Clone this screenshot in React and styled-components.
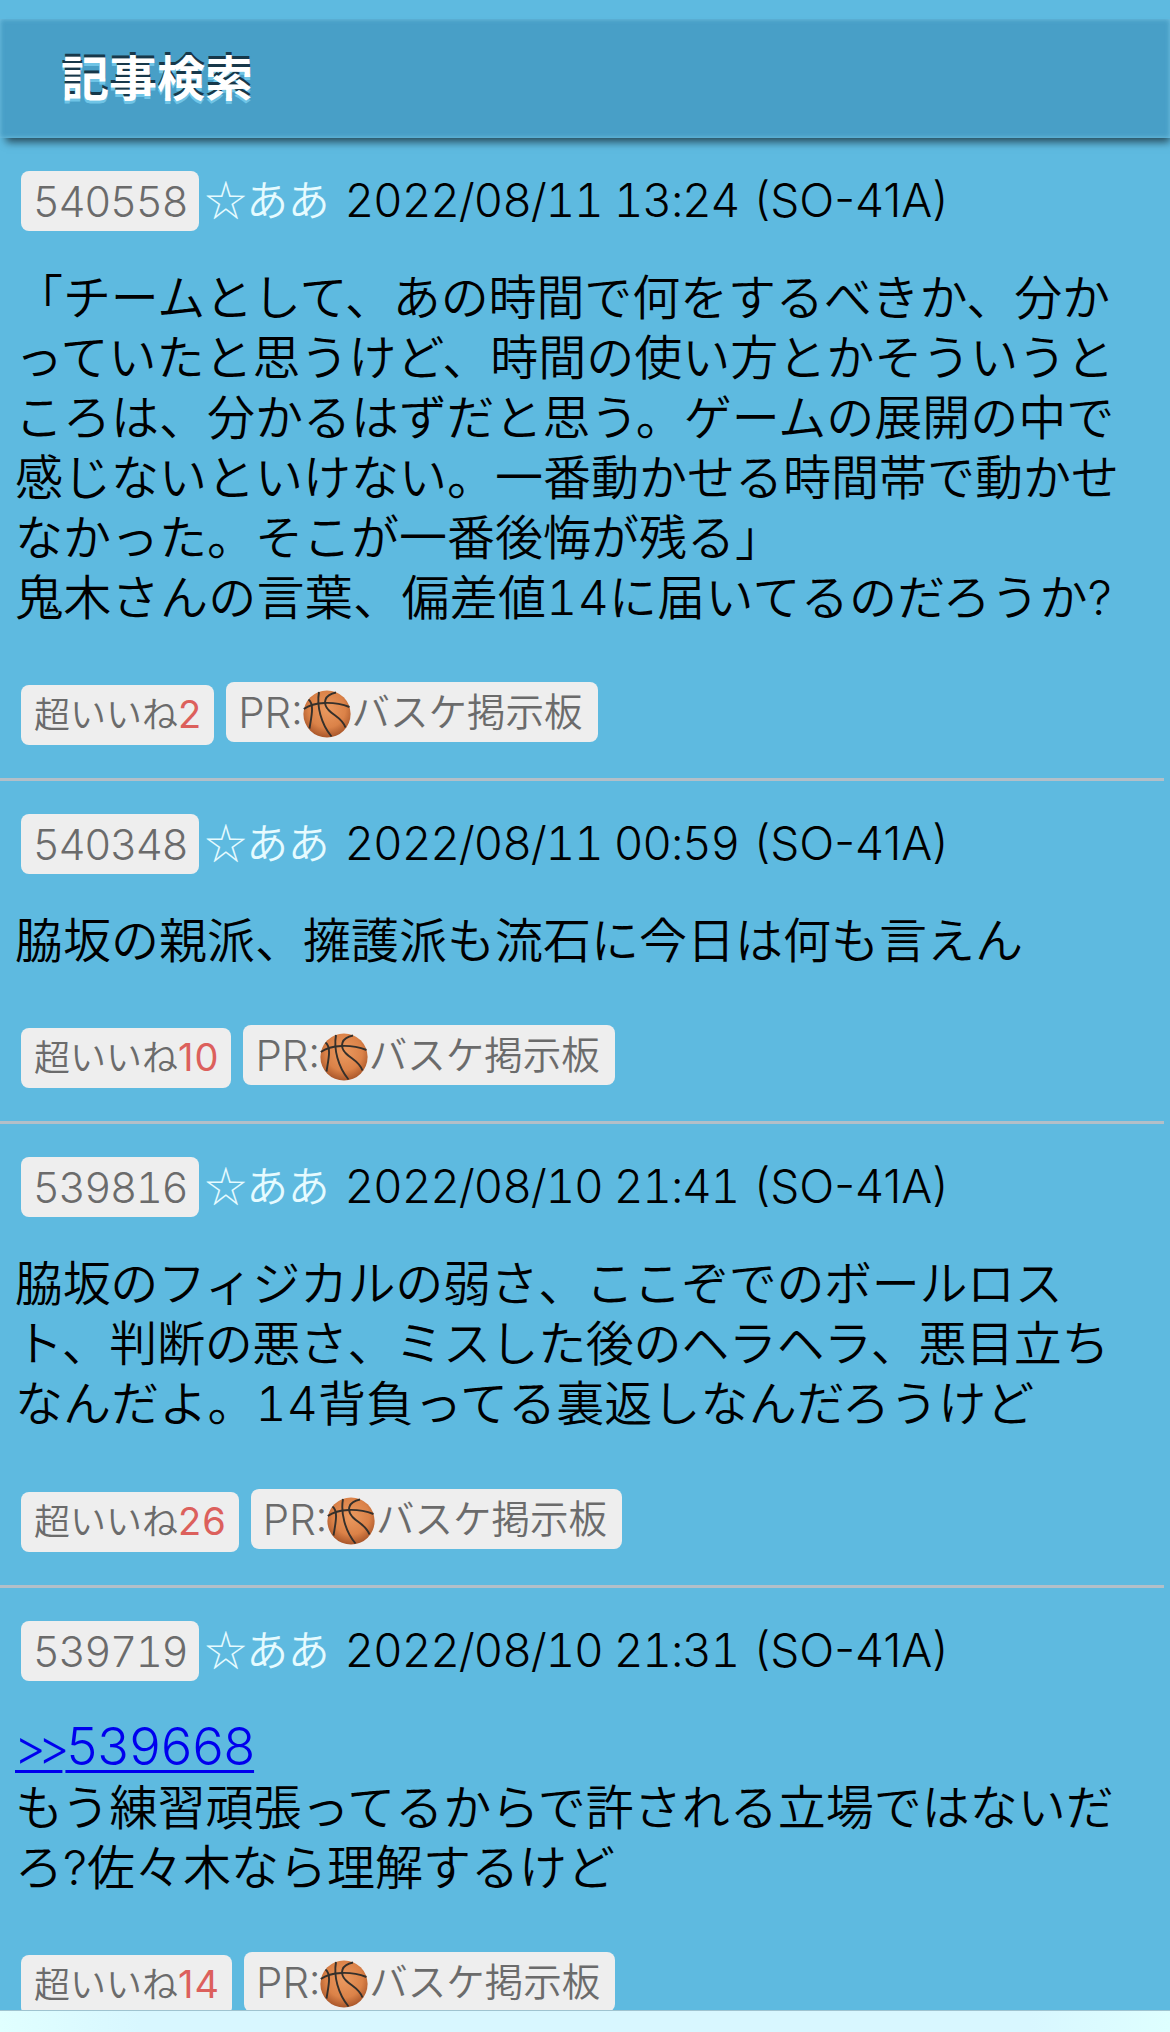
import styled, { createGlobalStyle } from 'styled-components'

const posts = [
  {
    id: '540558',
    date: '2022/08/11 13:24',
    likes: 2,
    lines: [
      { text: '「チームとして、あの時間で何をするべきか、分か', track: -0.12 },
      { text: 'っていたと思うけど、時間の使い方とかそういうと' },
      { text: 'ころは、分かるはずだと思う。ゲームの展開の中で' },
      { text: '感じないといけない。一番動かせる時間帯で動かせ' },
      { text: 'なかった。そこが一番後悔が残る」' },
      { text: '鬼木さんの言葉、偏差値14に届いてるのだろうか?', track: 0.3 },
    ],
  },
  {
    id: '540348',
    date: '2022/08/11 00:59',
    likes: 10,
    lines: [{ text: '脇坂の親派、擁護派も流石に今日は何も言えん' }],
  },
  {
    id: '539816',
    date: '2022/08/10 21:41',
    likes: 26,
    extra: 1,
    lines: [
      { text: '脇坂のフィジカルの弱さ、ここぞでのボールロス', track: -0.35 },
      { text: 'ト、判断の悪さ、ミスした後のヘラヘラ、悪目立ち', track: -0.35 },
      { text: 'なんだよ。14背負ってる裏返しなんだろうけど', track: 0.12 },
    ],
  },
  {
    id: '539719',
    date: '2022/08/10 21:31',
    likes: 14,
    reply: '539668',
    lines: [
      { text: 'もう練習頑張ってるからで許される立場ではないだ' },
      { text: 'ろ?佐々木なら理解するけど' },
    ],
  },
]

function Basketball() {
  return (
    <Ball viewBox="0 0 48 48">
      <defs>
        <radialGradient id="skin" cx="50%" cy="40%" r="60%">
          <stop offset="0" stopColor="#eb9a60" />
          <stop offset="0.65" stopColor="#db8248" />
          <stop offset="1" stopColor="#a9562a" />
        </radialGradient>
      </defs>
      <circle cx="24" cy="24" r="23.6" fill="url(#skin)" />
      <g fill="none" stroke="#35302b" strokeWidth="1.9">
        <path d="M0.800 19C11 11.500 31 11 46.500 17" />
        <path d="M16 2C13.500 16 18 34 28.500 46.500" />
        <path d="M33 2.500C21 5 19.500 13 25.500 20C31 26 39 28 42.500 37.500" />
        <path d="M5.500 9.500C11.500 14 8.500 26 6.500 38.500" />
      </g>
    </Ball>
  )
}

function Post({ post }) {
  return (
    <Article>
      <Meta>
        <Number>{post.id}</Number>
        <Name>☆ああ</Name>
        <Stamp>{post.date}</Stamp>
        <Device>(SO-41A)</Device>
      </Meta>
      <Body $extra={post.extra}>
        {post.reply && (
          <Reply href="#">
            <Arrows>&gt;&gt;</Arrows>
            {post.reply}
          </Reply>
        )}
        {post.lines.map((line) => (
          <Line key={line.text} $track={line.track}>{line.text}</Line>
        ))}
      </Body>
      <Chips>
        <Like>
          <Japanese>超いいね</Japanese>
          <Count>{post.likes}</Count>
        </Like>
        <Promo>
          <Pr>PR:</Pr>
          <Basketball />
          <Japanese>バスケ掲示板</Japanese>
        </Promo>
      </Chips>
    </Article>
  )
}

export default function App() {
  return (
    <>
      <Global />
      <Page>
        <Header>
          <h1>記事検索</h1>
        </Header>
        <List>
          {posts.map((post) => (
            <Post key={post.id} post={post} />
          ))}
        </List>
        <BottomBar />
      </Page>
    </>
  )
}

const Global = createGlobalStyle`
body{
margin:0;
background:#5ebae0;
font-family:Inter, "Noto Sans CJK JP", sans-serif;
font-weight:350;
font-variant-numeric:tabular-nums;
}
`

const Page = styled.div`
width:1170px;
height:2032px;
overflow:hidden;
display:flex;
flex-direction:column;
`

const Header = styled.header`
height:119px;
flex:none;
box-sizing:border-box;
margin-top:19px;
padding:0 0 8px 61px;
display:flex;
align-items:center;
background:#489fc7;
box-shadow:3px 7px 8px -3px rgba(0,0,0,0.6), inset 0 0 5px rgba(130,205,235,0.75);
h1{
margin:0;
font-size:48px;
font-weight:700;
color:white;
text-shadow:0 -3px 0 #17384a, 0 3px 0 #6fc4e6;
}
`

const List = styled.main`
flex:1;
min-height:0;
overflow:hidden;
`

const Article = styled.article`
width:1164px;
padding:33px 0;
border-bottom:3px solid #b3bfc8;
box-sizing:border-box;
`

const Meta = styled.div`
height:60px;
padding-left:21px;
display:flex;
align-items:center;
white-space:nowrap;
`

const Chip = styled.span`
height:60px;
border-radius:8px;
background:#eee;
color:#6b6b6b;
display:flex;
align-items:center;
justify-content:center;
box-sizing:border-box;
white-space:nowrap;
`

const Number = styled(Chip)`
width:178px;
font-size:42px;
letter-spacing:-1.4px;
`

const Name = styled.span`
margin-left:6px;
padding-bottom:6px;
color:#e6fbff;
font-family:"Noto Sans CJK JP", sans-serif;
font-size:41.5px;
line-height:54px;
`

const Stamp = styled.span`
margin-left:15px;
padding-bottom:3px;
font-size:46px;
letter-spacing:-1.2px;
`

const Device = styled(Stamp)`
margin-left:15px;
letter-spacing:0;
font-variant-numeric:normal;
`

const Body = styled.div`
padding:37px 0 ${(p) => 54 + (p.$extra || 0)}px 15px;
`

const Line = styled.div`
height:60px;
line-height:60px;
font-size:48px;
letter-spacing:${(p) => p.$track || 0}px;
white-space:nowrap;
`

const Reply = styled.a`
display:block;
width:max-content;
height:60px;
line-height:58px;
font-size:52px;
letter-spacing:-2.2px;
color:#00e;
text-underline-offset:5px;
text-decoration-thickness:3px;
`

const Arrows = styled.span`
font-size:49px;
letter-spacing:-8px;
margin-right:3px;
`

const Chips = styled.div`
height:63px;
padding-left:21px;
display:flex;
gap:12px;
`

const Japanese = styled.span`
font-family:"Noto Sans CJK JP", sans-serif;
line-height:54px;
padding-bottom:6px;
`

const Like = styled(Chip)`
margin-top:3px;
padding:0 12px 0 13px;
font-size:36px;
`

const Count = styled.span`
font-weight:400;
font-size:38px;
letter-spacing:1px;
font-variant-numeric:normal;
padding-bottom:2px;
color:#dc605c;
`

const Promo = styled(Chip)`
padding:0 15px 0 12px;
font-size:38.5px;
`

const Pr = styled.span`
font-size:42px;
`

const Ball = styled.svg`
width:48px;
height:48px;
margin:3px 1px 0 0;
`

const BottomBar = styled.footer`
flex:none;
height:22px;
box-sizing:border-box;
border-top:1px solid #9fc3d0;
background:linear-gradient(90deg, #e0ffff, #d8f7ff 12%, #d8f7ff 88%, #deffff);
`
